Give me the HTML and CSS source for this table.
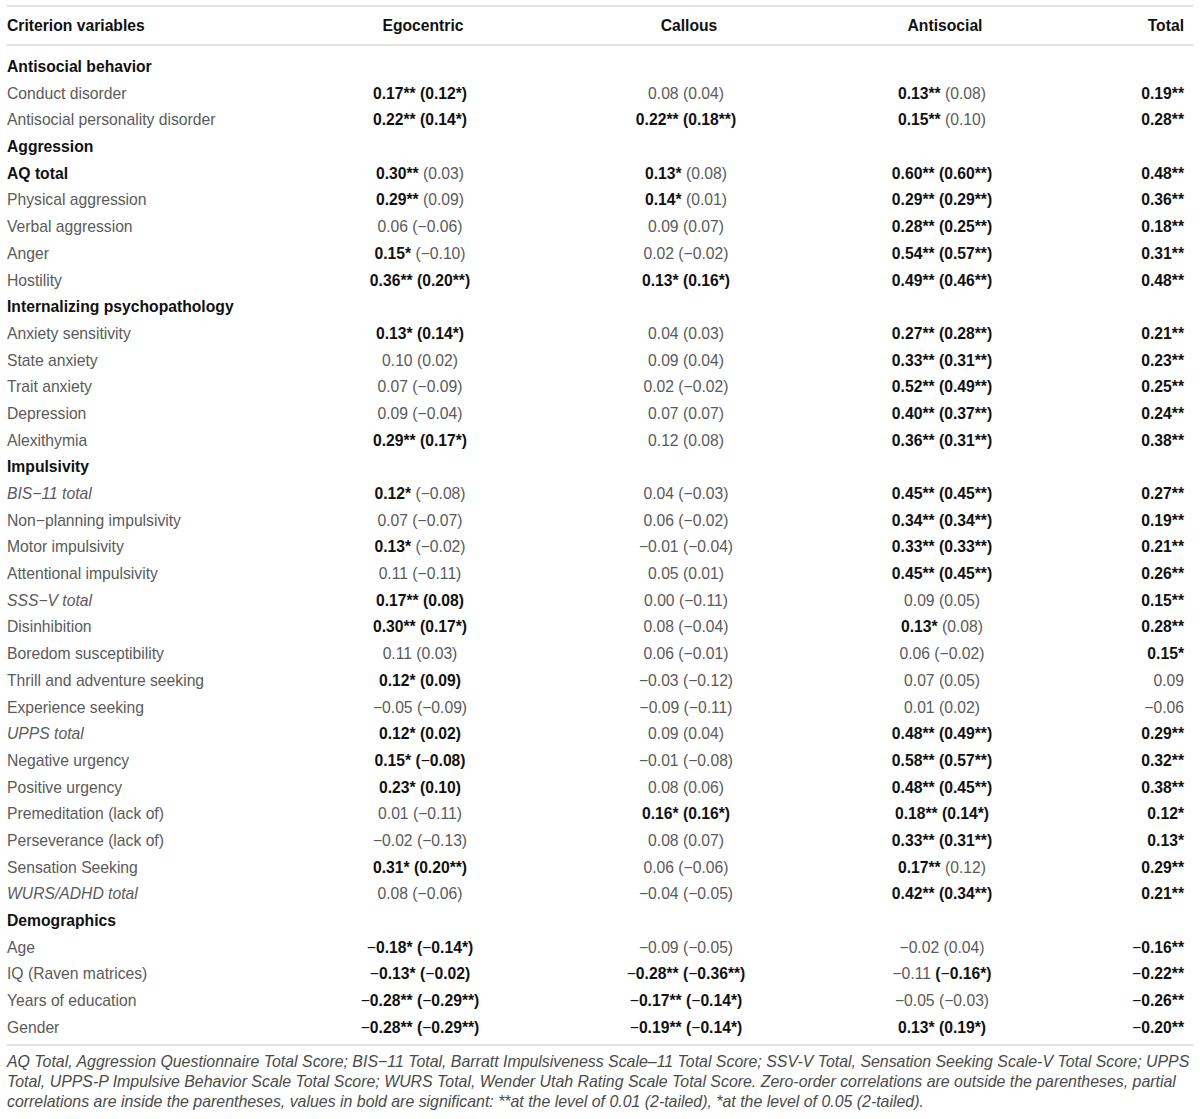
FILE: index.html
```html
<!DOCTYPE html>
<html lang="en">
<head>
<meta charset="utf-8">
<title>Correlations table</title>
<link rel="stylesheet" href="styles.css">
</head>
<body>
<div class="table">
  <div class="row head">
    <div class="c1">Criterion variables</div>
    <div class="cc">Egocentric</div>
    <div class="cc">Callous</div>
    <div class="cc">Antisocial</div>
    <div class="cr">Total</div>
  </div>
  <div class="body">
    <div class="row"><div class="c1 sec">Antisocial behavior</div></div>
    <div class="row"><div class="c1">Conduct disorder</div><div class="cc"><b>0.17** (0.12*)</b></div><div class="cc">0.08 (0.04)</div><div class="cc"><b>0.13**</b> (0.08)</div><div class="cr"><b>0.19**</b></div></div>
    <div class="row"><div class="c1">Antisocial personality disorder</div><div class="cc"><b>0.22** (0.14*)</b></div><div class="cc"><b>0.22** (0.18**)</b></div><div class="cc"><b>0.15**</b> (0.10)</div><div class="cr"><b>0.28**</b></div></div>
    <div class="row"><div class="c1 sec">Aggression</div></div>
    <div class="row"><div class="c1 sec">AQ total</div><div class="cc"><b>0.30**</b> (0.03)</div><div class="cc"><b>0.13*</b> (0.08)</div><div class="cc"><b>0.60** (0.60**)</b></div><div class="cr"><b>0.48**</b></div></div>
    <div class="row"><div class="c1">Physical aggression</div><div class="cc"><b>0.29**</b> (0.09)</div><div class="cc"><b>0.14*</b> (0.01)</div><div class="cc"><b>0.29** (0.29**)</b></div><div class="cr"><b>0.36**</b></div></div>
    <div class="row"><div class="c1">Verbal aggression</div><div class="cc">0.06 (−0.06)</div><div class="cc">0.09 (0.07)</div><div class="cc"><b>0.28** (0.25**)</b></div><div class="cr"><b>0.18**</b></div></div>
    <div class="row"><div class="c1">Anger</div><div class="cc"><b>0.15*</b> (−0.10)</div><div class="cc">0.02 (−0.02)</div><div class="cc"><b>0.54** (0.57**)</b></div><div class="cr"><b>0.31**</b></div></div>
    <div class="row"><div class="c1">Hostility</div><div class="cc"><b>0.36** (0.20**)</b></div><div class="cc"><b>0.13* (0.16*)</b></div><div class="cc"><b>0.49** (0.46**)</b></div><div class="cr"><b>0.48**</b></div></div>
    <div class="row"><div class="c1 sec">Internalizing psychopathology</div></div>
    <div class="row"><div class="c1">Anxiety sensitivity</div><div class="cc"><b>0.13* (0.14*)</b></div><div class="cc">0.04 (0.03)</div><div class="cc"><b>0.27** (0.28**)</b></div><div class="cr"><b>0.21**</b></div></div>
    <div class="row"><div class="c1">State anxiety</div><div class="cc">0.10 (0.02)</div><div class="cc">0.09 (0.04)</div><div class="cc"><b>0.33** (0.31**)</b></div><div class="cr"><b>0.23**</b></div></div>
    <div class="row"><div class="c1">Trait anxiety</div><div class="cc">0.07 (−0.09)</div><div class="cc">0.02 (−0.02)</div><div class="cc"><b>0.52** (0.49**)</b></div><div class="cr"><b>0.25**</b></div></div>
    <div class="row"><div class="c1">Depression</div><div class="cc">0.09 (−0.04)</div><div class="cc">0.07 (0.07)</div><div class="cc"><b>0.40** (0.37**)</b></div><div class="cr"><b>0.24**</b></div></div>
    <div class="row"><div class="c1">Alexithymia</div><div class="cc"><b>0.29** (0.17*)</b></div><div class="cc">0.12 (0.08)</div><div class="cc"><b>0.36** (0.31**)</b></div><div class="cr"><b>0.38**</b></div></div>
    <div class="row"><div class="c1 sec">Impulsivity</div></div>
    <div class="row"><div class="c1"><i>BIS−11 total</i></div><div class="cc"><b>0.12*</b> (−0.08)</div><div class="cc">0.04 (−0.03)</div><div class="cc"><b>0.45** (0.45**)</b></div><div class="cr"><b>0.27**</b></div></div>
    <div class="row"><div class="c1">Non−planning impulsivity</div><div class="cc">0.07 (−0.07)</div><div class="cc">0.06 (−0.02)</div><div class="cc"><b>0.34** (0.34**)</b></div><div class="cr"><b>0.19**</b></div></div>
    <div class="row"><div class="c1">Motor impulsivity</div><div class="cc"><b>0.13*</b> (−0.02)</div><div class="cc">−0.01 (−0.04)</div><div class="cc"><b>0.33** (0.33**)</b></div><div class="cr"><b>0.21**</b></div></div>
    <div class="row"><div class="c1">Attentional impulsivity</div><div class="cc">0.11 (−0.11)</div><div class="cc">0.05 (0.01)</div><div class="cc"><b>0.45** (0.45**)</b></div><div class="cr"><b>0.26**</b></div></div>
    <div class="row"><div class="c1"><i>SSS−V total</i></div><div class="cc"><b>0.17** (0.08)</b></div><div class="cc">0.00 (−0.11)</div><div class="cc">0.09 (0.05)</div><div class="cr"><b>0.15**</b></div></div>
    <div class="row"><div class="c1">Disinhibition</div><div class="cc"><b>0.30** (0.17*)</b></div><div class="cc">0.08 (−0.04)</div><div class="cc"><b>0.13*</b> (0.08)</div><div class="cr"><b>0.28**</b></div></div>
    <div class="row"><div class="c1">Boredom susceptibility</div><div class="cc">0.11 (0.03)</div><div class="cc">0.06 (−0.01)</div><div class="cc">0.06 (−0.02)</div><div class="cr"><b>0.15*</b></div></div>
    <div class="row"><div class="c1">Thrill and adventure seeking</div><div class="cc"><b>0.12* (0.09)</b></div><div class="cc">−0.03 (−0.12)</div><div class="cc">0.07 (0.05)</div><div class="cr">0.09</div></div>
    <div class="row"><div class="c1">Experience seeking</div><div class="cc">−0.05 (−0.09)</div><div class="cc">−0.09 (−0.11)</div><div class="cc">0.01 (0.02)</div><div class="cr">−0.06</div></div>
    <div class="row"><div class="c1"><i>UPPS total</i></div><div class="cc"><b>0.12* (0.02)</b></div><div class="cc">0.09 (0.04)</div><div class="cc"><b>0.48** (0.49**)</b></div><div class="cr"><b>0.29**</b></div></div>
    <div class="row"><div class="c1">Negative urgency</div><div class="cc"><b>0.15* (<span class="m">−</span>0.08)</b></div><div class="cc">−0.01 (−0.08)</div><div class="cc"><b>0.58** (0.57**)</b></div><div class="cr"><b>0.32**</b></div></div>
    <div class="row"><div class="c1">Positive urgency</div><div class="cc"><b>0.23* (0.10)</b></div><div class="cc">0.08 (0.06)</div><div class="cc"><b>0.48** (0.45**)</b></div><div class="cr"><b>0.38**</b></div></div>
    <div class="row"><div class="c1">Premeditation (lack of)</div><div class="cc">0.01 (−0.11)</div><div class="cc"><b>0.16* (0.16*)</b></div><div class="cc"><b>0.18** (0.14*)</b></div><div class="cr"><b>0.12*</b></div></div>
    <div class="row"><div class="c1">Perseverance (lack of)</div><div class="cc">−0.02 (−0.13)</div><div class="cc">0.08 (0.07)</div><div class="cc"><b>0.33** (0.31**)</b></div><div class="cr"><b>0.13*</b></div></div>
    <div class="row"><div class="c1">Sensation Seeking</div><div class="cc"><b>0.31* (0.20**)</b></div><div class="cc">0.06 (−0.06)</div><div class="cc"><b>0.17**</b> (0.12)</div><div class="cr"><b>0.29**</b></div></div>
    <div class="row"><div class="c1"><i>WURS/ADHD total</i></div><div class="cc">0.08 (−0.06)</div><div class="cc">−0.04 (−0.05)</div><div class="cc"><b>0.42** (0.34**)</b></div><div class="cr"><b>0.21**</b></div></div>
    <div class="row"><div class="c1 sec">Demographics</div></div>
    <div class="row"><div class="c1">Age</div><div class="cc"><b><span class="m">−</span>0.18* (<span class="m">−</span>0.14*)</b></div><div class="cc">−0.09 (−0.05)</div><div class="cc">−0.02 (0.04)</div><div class="cr"><b><span class="m">−</span>0.16**</b></div></div>
    <div class="row"><div class="c1">IQ (Raven matrices)</div><div class="cc"><b><span class="m">−</span>0.13* (<span class="m">−</span>0.02)</b></div><div class="cc"><b><span class="m">−</span>0.28** (<span class="m">−</span>0.36**)</b></div><div class="cc">−0.11 <b>(<span class="m">−</span>0.16*)</b></div><div class="cr"><b><span class="m">−</span>0.22**</b></div></div>
    <div class="row"><div class="c1">Years of education</div><div class="cc"><b><span class="m">−</span>0.28** (<span class="m">−</span>0.29**)</b></div><div class="cc"><b><span class="m">−</span>0.17** (<span class="m">−</span>0.14*)</b></div><div class="cc">−0.05 (−0.03)</div><div class="cr"><b><span class="m">−</span>0.26**</b></div></div>
    <div class="row"><div class="c1">Gender</div><div class="cc"><b><span class="m">−</span>0.28** (<span class="m">−</span>0.29**)</b></div><div class="cc"><b><span class="m">−</span>0.19** (<span class="m">−</span>0.14*)</b></div><div class="cc"><b>0.13* (0.19*)</b></div><div class="cr"><b><span class="m">−</span>0.20**</b></div></div>
  </div>
  <p class="note">AQ Total, Aggression Questionnaire Total Score; BIS−11 Total, Barratt Impulsiveness Scale–11 Total Score; SSV-V Total, Sensation Seeking Scale-V Total Score; UPPS Total, UPPS-P Impulsive Behavior Scale Total Score; WURS Total, Wender Utah Rating Scale Total Score. Zero-order correlations are outside the parentheses, partial correlations are inside the parentheses, values in bold are significant: **at the level of 0.01 (2-tailed), *at the level of 0.05 (2-tailed).</p>
</div>
</body>
</html>
```

FILE: styles.css
```css
html, body {
  margin: 0;
  padding: 0;
  background: #ffffff;
}

body {
  font-family: "Liberation Sans", Arial, Helvetica, sans-serif;
  font-size: 15.7px;
  color: #5a5a5a;
}

.table {
  margin: 5px 7px 0 7px;
}

.row {
  display: grid;
  grid-template-columns: 283px 260px 272px 240px 1fr;
  height: 26.7px;
  align-items: center;
  white-space: nowrap;
}

.head {
  border-top: 2px solid #e3e3e3;
  border-bottom: 2px solid #e3e3e3;
  height: 37px;
  font-weight: bold;
  color: #111111;
}

.head .cc {
  padding-left: 6px;
}

.body {
  padding: 7.7px 0 2.5px 0;
  border-bottom: 2px solid #e3e3e3;
}

.c1 {
  text-align: left;
}

.cc {
  text-align: center;
}

.cr {
  text-align: right;
  padding-right: 9px;
}

.sec {
  font-weight: bold;
  color: #111111;
}

b {
  font-weight: bold;
  color: #111111;
}

.m {
  font-weight: normal;
}

.note {
  margin: 0 -3px 0 0;
  padding-top: 6px;
  font-style: italic;
  font-size: 15.9px;
  line-height: 20px;
  color: #4a4a4a;
}
```
